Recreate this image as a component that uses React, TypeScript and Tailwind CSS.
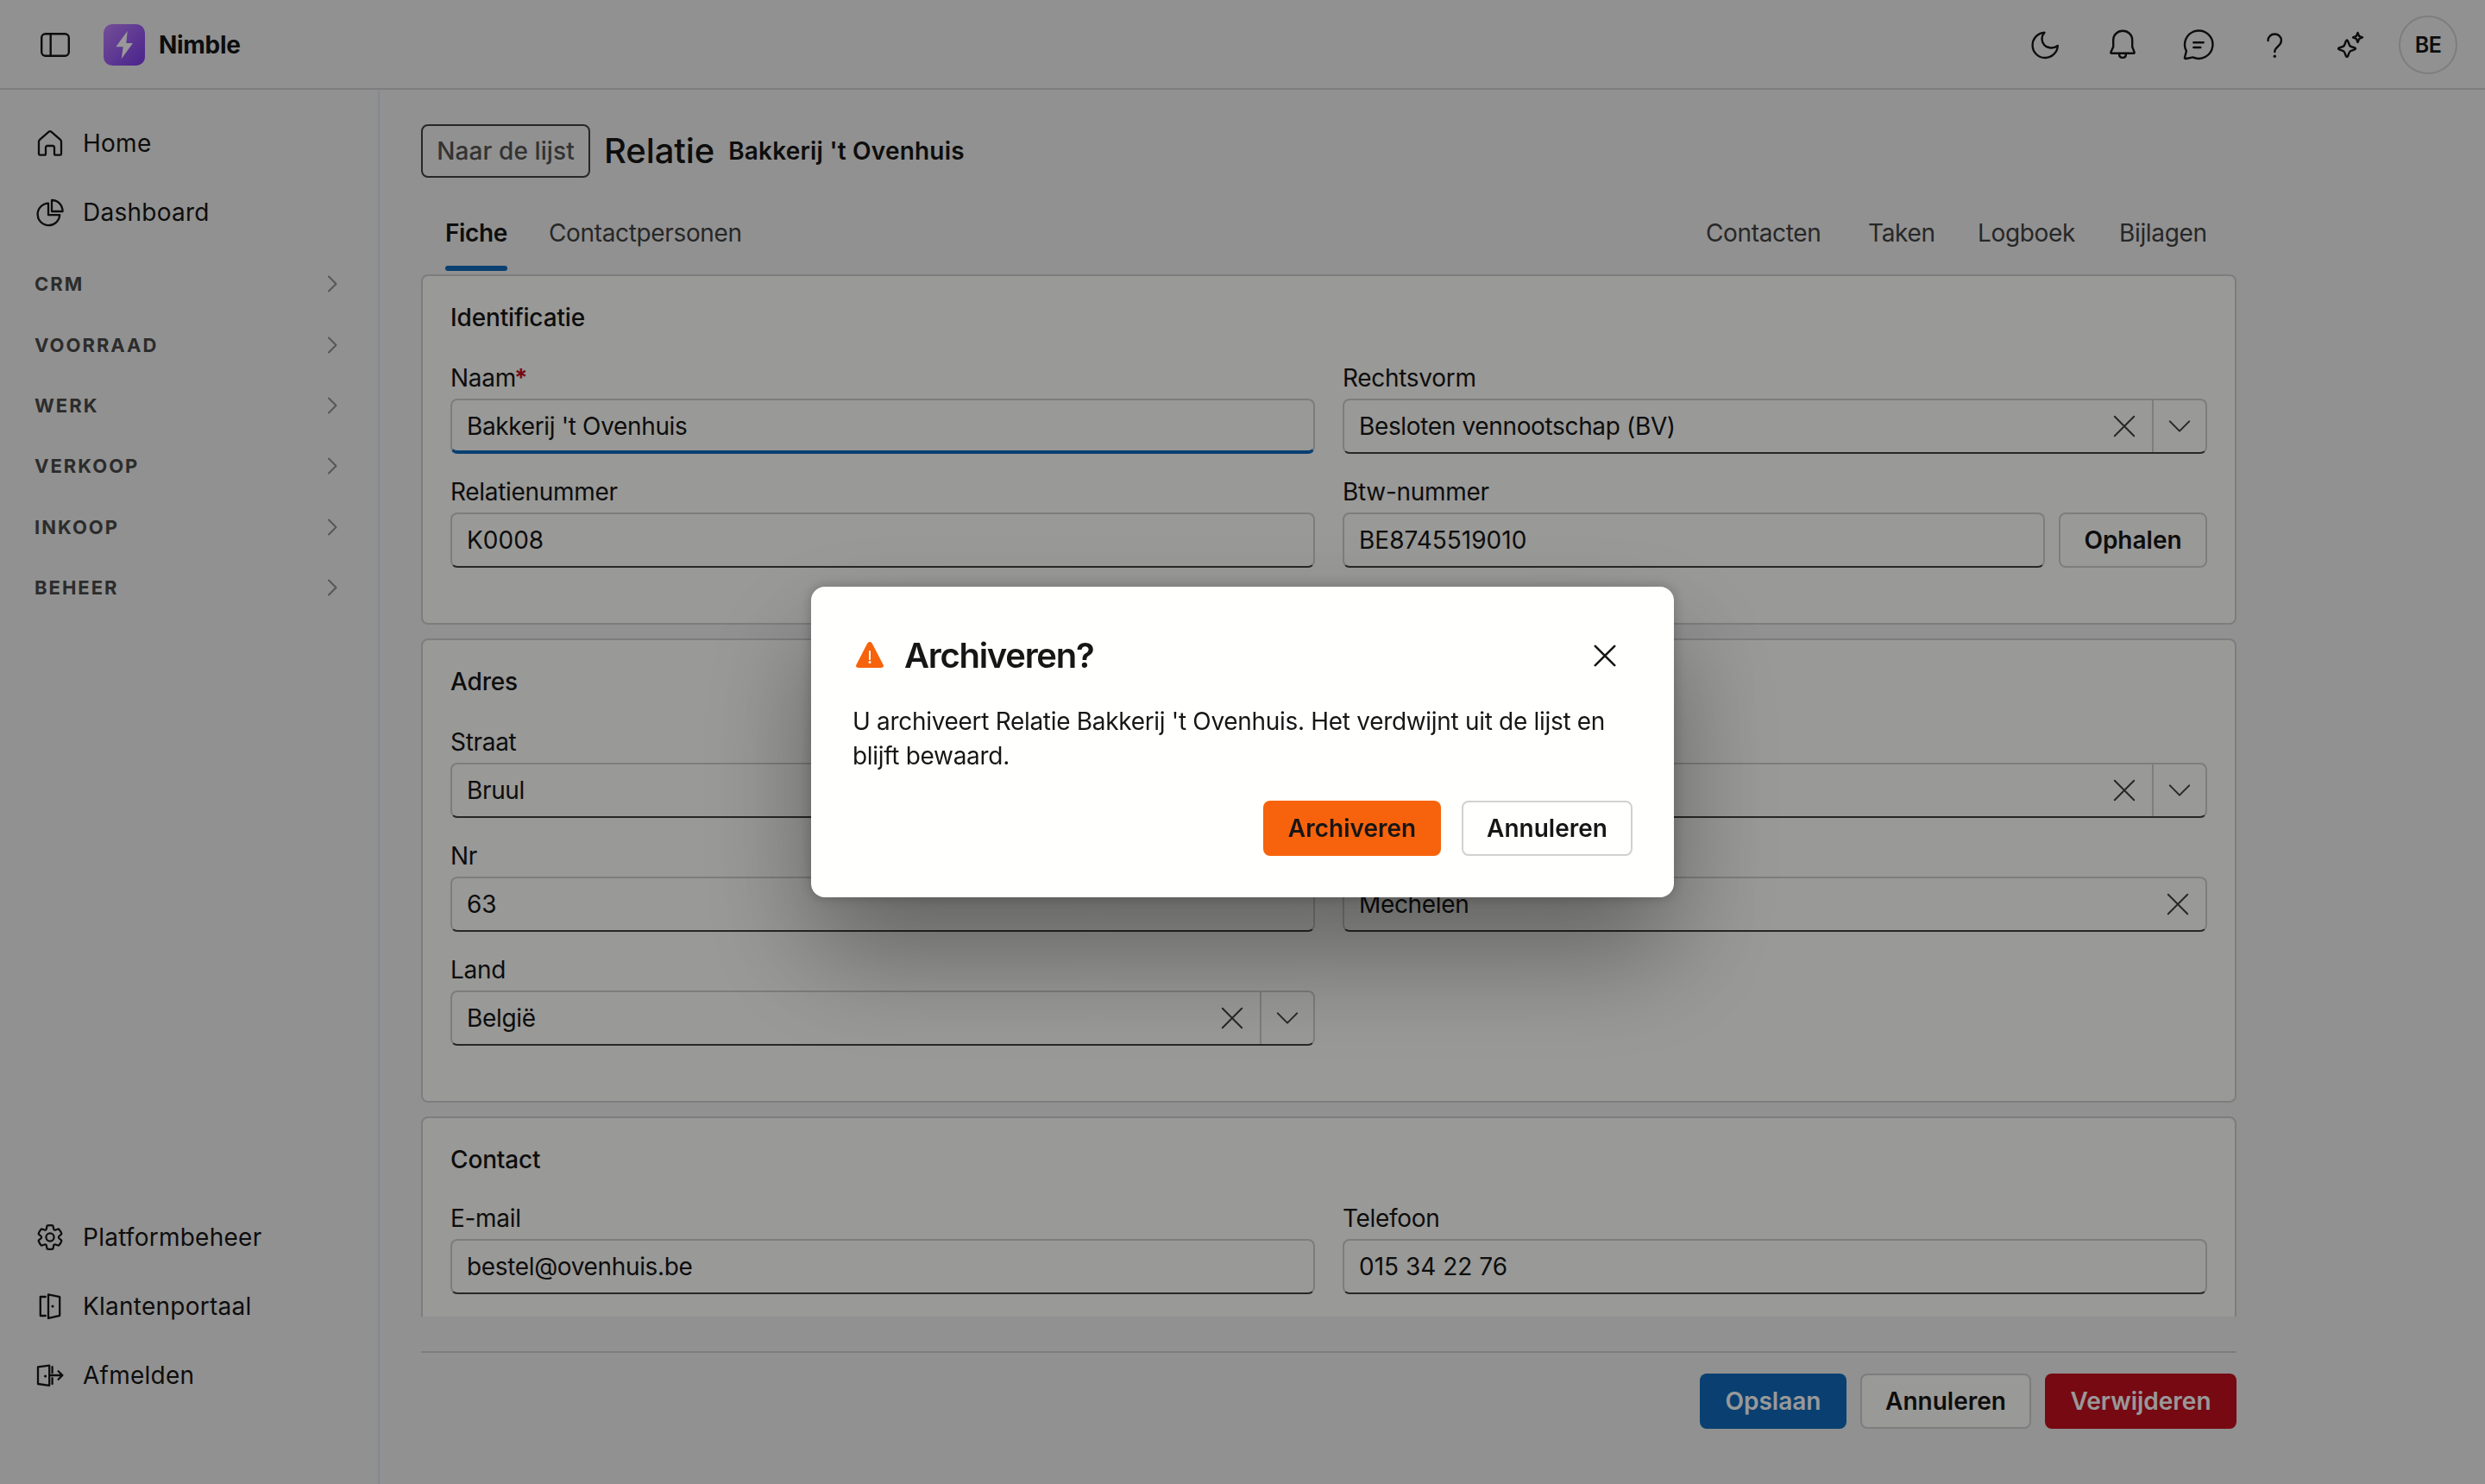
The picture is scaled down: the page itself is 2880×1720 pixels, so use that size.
import type { ReactNode } from "react";
import clsx from "clsx";

function Icon({ size = "size-10", box = 20, stroke = 1.15, children }: { size?: string; box?: number; stroke?: number; children: ReactNode }) {
  return (
    <svg
      className={clsx("shrink-0", size)}
      viewBox={`0 0 ${box} ${box}`}
      fill="none"
      stroke="currentColor"
      strokeWidth={stroke}
      strokeLinecap="round"
      strokeLinejoin="round"
    >
      {children}
    </svg>
  );
}

const HomeIcon = () => (
  <Icon>
    <path d="M9.2 3.4a1.2 1.2 0 0 1 1.6 0l5.3 4.7c.3.3.4.6.4 1v7c0 .4-.2.7-.6.7h-2.7a.7.7 0 0 1-.7-.7v-3.7a.9.9 0 0 0-.9-.9H8.4a.9.9 0 0 0-.9.9v3.7c0 .4-.3.7-.7.7H4.1a.7.7 0 0 1-.6-.7v-7c0-.4.1-.7.4-1z" />
  </Icon>
);

const PieIcon = () => (
  <Icon>
    <path d="M9 4.8a6.4 6.4 0 1 0 6.6 6.8H9z" />
    <path d="M11 3c3.5 0 6.2 2.7 6.3 6.5H11z" />
  </Icon>
);

const GearIcon = () => (
  <Icon stroke={1.35}>
    <g transform="translate(10 10) scale(.82) translate(-10 -10)">
      <path d="M1.91 7.38A8.5 8.5 0 0 1 3.69 4.3a.5.5 0 0 1 .54-.13l1.92.68a1 1 0 0 0 1.32-.76l.36-2a.5.5 0 0 1 .4-.4 8.53 8.53 0 0 1 3.55 0c.2.04.35.2.38.4l.37 2a1 1 0 0 0 1.32.76l1.92-.68a.5.5 0 0 1 .54.13 8.5 8.5 0 0 1 1.78 3.08c.06.2 0 .4-.15.54l-1.56 1.32a1 1 0 0 0 0 1.52l1.56 1.32a.5.5 0 0 1 .15.54 8.5 8.5 0 0 1-1.78 3.08.5.5 0 0 1-.54.13l-1.92-.68a1 1 0 0 0-1.32.76l-.37 2a.5.5 0 0 1-.38.4 8.53 8.53 0 0 1-3.56 0 .5.5 0 0 1-.39-.4l-.36-2a1 1 0 0 0-1.32-.76l-1.92.68a.5.5 0 0 1-.54-.13 8.5 8.5 0 0 1-1.78-3.08.5.5 0 0 1 .15-.54l1.56-1.32a1 1 0 0 0 0-1.52L2.06 7.92a.5.5 0 0 1-.15-.54Z" />
      <circle cx="10" cy="10" r="2.8" />
    </g>
  </Icon>
);

const DoorIcon = () => (
  <Icon>
    <path d="M9 3.2l6.6 1.4v10.8L9 16.9zM7.4 4.5h-3v11h3" />
    <circle cx="11.5" cy="10" r=".8" fill="currentColor" stroke="none" />
  </Icon>
);

const ExitIcon = () => (
  <Icon>
    <path d="M3 5.2l6.6-.9v11.6L3 15zM11.3 5.1v3.5M11.3 11.6v3.4M9.8 10h7.3M14.8 7.6l2.4 2.4-2.4 2.4" />
    <circle cx="7.3" cy="10.5" r=".8" fill="currentColor" stroke="none" />
  </Icon>
);

const CloseIcon = ({ stroke = 2 }: { stroke?: number }) => (
  <Icon size="size-8" box={32} stroke={stroke}>
    <path d="M4.8 4.8l22.4 22.4M27.2 4.8L4.8 27.2" />
  </Icon>
);

const ChevronDown = () => (
  <Icon size="size-8" box={32} stroke={2}>
    <path d="M4.8 10.4L16 21.6l11.2-11.2" />
  </Icon>
);

const topbarIcons = [
  <path d="M21.5 9.8A14.6 14.6 0 1 0 36.8 25c-2.6 2-5.3 2.7-8.3 2.5-6.5-.5-10-5.5-10-10.5 0-3 1-5 3-7.2z" />,
  <>
    <path d="M24.2 7.8c-6.2 0-11 4.6-11 10.6v7.8l-2.8 6.2c-.3.7 0 1.3.8 1.3h25.6c.8 0 1.1-.6.8-1.3l-2.4-6.2v-7.8c0-6-4.8-10.6-11-10.6z" />
    <path d="M20 33.9c0 3.3 1.5 5 4 5s4-1.7 4-5" />
  </>,
  <>
    <path d="M17.5 38.4A16.2 16.2 0 1 0 9.9 31.2L8 38.5c-.3 1.1.3 1.7 1.4 1.5z" />
    <path d="M18.3 21.3h11.4M18.3 27h8" />
  </>,
  <>
    <path d="M16.6 19c0-4.5 3.3-7.5 7.7-7.5s7.6 3.2 7.6 7.5c0 3.5-2 5-4.2 7.2-2.2 2-3.4 3.4-3.4 5.8" />
    <circle cx="24.3" cy="37.3" r="1.7" fill="currentColor" stroke="none" />
  </>,
  <>
    <path d="M18.9 19.5q1.1-2.3 2.2 0l1.7 4.5q.5 1.5 2 2l4.2 1.3q2 1 0 2l-4.2 1.5q-1.5.4-2 1.8l-1.7 4.4q-1.1 2.3-2.2 0l-1.7-4.4q-.5-1.4-2-1.8L11 29.3q-2-1 0-2l4.2-1.3q1.5-.5 2-2z" />
    <path d="M32.5 9.9l1.6 4 3.9 1.5-3.9 1.6-1.6 4-1.6-4-3.9-1.6 3.9-1.5z" />
  </>,
];

function Topbar() {
  return (
    <header className="flex h-[104px] shrink-0 items-center border-b-2 border-[#d1d1d1] pt-0.5 pr-8 pl-10">
      <Icon size="size-12" box={48} stroke={2.4}>
        <rect x="8.2" y="11.2" width="31.6" height="25.6" rx="4.5" />
        <path d="M18.7 11.2v25.6" />
      </Icon>
      <svg className="ml-8 size-12" viewBox="0 0 48 48">
        <defs>
          <linearGradient id="logo" x1="0" y1="0" x2="1" y2="1">
            <stop offset="0" stopColor="#c084fc" />
            <stop offset="1" stopColor="#7c3aed" />
          </linearGradient>
        </defs>
        <rect width="48" height="48" rx="10" fill="url(#logo)" />
        <path d="M27.7 8L14.3 26.3h8.4l-2 14L34 22h-7.7z" fill="#fff" />
      </svg>
      <span className="ml-4 font-bold tracking-[-0.3px]">Nimble</span>
      <div className="ml-auto flex">
        {topbarIcons.map((icon, i) => (
          <button key={i} className="flex w-[88px] justify-center">
            <Icon size="size-12" box={48} stroke={2.4}>{icon}</Icon>
          </button>
        ))}
      </div>
      <div className="ml-3 flex size-[68px] items-center justify-center rounded-full border-2 border-[#d1d1d1] text-[25px] font-semibold tracking-[-0.5px]">
        BE
      </div>
    </header>
  );
}

const groups = ["CRM", "Voorraad", "Werk", "Verkoop", "Inkoop", "Beheer"];

function NavItem({ icon, label }: { icon: ReactNode; label: string }) {
  return (
    <a className="flex h-20 items-center gap-[18px] tracking-[0.25px]">
      {icon}
      {label}
    </a>
  );
}

function Sidebar() {
  return (
    <aside className="flex w-[440px] shrink-0 flex-col border-r-2 border-[#dde5ed] pt-[22px] pr-[46px] pb-[86px] pl-[38px]">
      <NavItem icon={<HomeIcon />} label="Home" />
      <NavItem icon={<PieIcon />} label="Dashboard" />
      <div className="mt-2 flex flex-col">
        {groups.map((group) => (
          <div key={group} className="flex h-[70.4px] items-center justify-between pl-0.5">
            <span className="text-[22px] font-bold tracking-[2px] text-[#4a4a4a] uppercase">{group}</span>
            <svg className="mr-px h-5 w-3 text-[#8f8f8f]" viewBox="0 0 12 20" fill="none" stroke="currentColor" strokeWidth="2" strokeLinecap="round" strokeLinejoin="round">
              <path d="M2 1.5l8.5 8.5L2 18.5" />
            </svg>
          </div>
        ))}
      </div>
      <div className="mt-auto flex flex-col">
        <NavItem icon={<GearIcon />} label="Platformbeheer" />
        <NavItem icon={<DoorIcon />} label="Klantenportaal" />
        <NavItem icon={<ExitIcon />} label="Afmelden" />
      </div>
    </aside>
  );
}

interface FieldProps {
  label: string;
  value: string;
  required?: boolean;
  focused?: boolean;
  clearable?: boolean;
  select?: boolean;
  action?: string;
}

function Field({ label, value, required, focused, clearable, select, action }: FieldProps) {
  return (
    <div className="flex flex-col gap-1">
      <label className="h-10 tracking-[-0.3px]">
        {label}
        {required && <span className="-ml-0.5 font-bold text-[#c50f1f]">*</span>}
      </label>
      <div className="flex gap-4">
        <div
          className={clsx(
            "flex h-16 flex-1 items-center rounded-lg border-2 border-[#d1d1d1] pl-[17px]",
            focused ? "border-b-4 border-b-[#0f6cbd] pt-0.5" : "border-b-[#424242]",
          )}
        >
          <span className={clsx("flex-1", /[a-z]/.test(value) && "tracking-[-0.35px]")}>{value}</span>
          {(clearable || select) && (
            <span className="flex w-16 justify-center text-[#424242]">
              <CloseIcon />
            </span>
          )}
          {select && (
            <span className="flex h-full w-[62px] items-center justify-center border-l-2 border-[#d1d1d1] text-[#424242]">
              <ChevronDown />
            </span>
          )}
        </div>
        {action && (
          <button className="h-16 w-[172px] rounded-lg border-2 border-[#d1d1d1] font-semibold">{action}</button>
        )}
      </div>
    </div>
  );
}

function Card({ title, className, children }: { title: string; className?: string; children: ReactNode }) {
  return (
    <section className={clsx("shrink-0 rounded-lg border-2 border-[#d1d1d1] bg-[#fffffc] px-8 pt-7", className)}>
      <h2 className="h-10 font-medium tracking-[-0.15px]">{title}</h2>
      {children}
    </section>
  );
}

function Tabs() {
  return (
    <nav className="mt-8 flex h-20 items-start pt-3 pr-[34px] pl-7 tracking-[-0.35px] text-[#424242]">
      <span className="flex h-16 w-[72px] flex-col justify-between font-semibold text-[#161616]">
        Fiche
        <span className="h-1.5 rounded-full bg-[#0f6cbd]" />
      </span>
      <span className="ml-12">Contactpersonen</span>
      <div className="ml-auto flex">
        <span className="w-[188px]">Contacten</span>
        <span className="w-[127px]">Taken</span>
        <span className="w-[164px]">Logboek</span>
        <span className="w-[102px]">Bijlagen</span>
      </div>
    </nav>
  );
}

function RelationPage() {
  return (
    <main className="flex w-[2152px] flex-col pl-12 pt-10">
      <div className="flex h-[62px] items-center gap-4">
        <button className="h-[62px] w-[196px] rounded-lg border-2 border-[#424242] font-medium tracking-[0.1px] text-[#555]">Naar de lijst</button>
        <h1 className="text-[40px] font-medium tracking-[-0.1px]">Relatie</h1>
        <span className="font-semibold tracking-[0.2px]">Bakkerij 't Ovenhuis</span>
      </div>
      <Tabs />
      <div className="flex h-[1208px] shrink-0 flex-col gap-4 overflow-hidden">
        <Card title="Identificatie" className="h-[406px]">
          <div className="mt-[30px] grid grid-cols-2 gap-x-8 gap-y-6">
            <Field label="Naam" value="Bakkerij 't Ovenhuis" required focused />
            <Field label="Rechtsvorm" value="Besloten vennootschap (BV)" select />
            <Field label="Relatienummer" value="K0008" />
            <Field label="Btw-nummer" value="BE8745519010" action="Ophalen" />
          </div>
        </Card>
        <Card title="Adres" className="h-[538px]">
          <div className="mt-[30px] grid grid-cols-2 gap-x-8 gap-y-6">
            <Field label="Straat" value="Bruul" />
            <Field label="" value="" select />
            <Field label="Nr" value="63" />
            <Field label="" value="Mechelen" clearable />
            <Field label="Land" value="België" select />
          </div>
        </Card>
        <Card title="Contact" className="h-[406px]">
          <div className="mt-7 grid grid-cols-2 gap-x-8 gap-y-6">
            <Field label="E-mail" value="bestel@ovenhuis.be" />
            <Field label="Telefoon" value="015 34 22 76" />
          </div>
        </Card>
      </div>
      <footer className="mt-10 flex justify-end gap-4 border-t-2 border-[#d1d1d1] pt-6 font-semibold">
        <button className="h-16 w-[170px] rounded-lg bg-[#0f6cbd] text-white">Opslaan</button>
        <button className="h-16 w-[198px] rounded-lg border-2 border-[#d1d1d1] bg-[#fffffc]">Annuleren</button>
        <button className="h-16 w-[222px] rounded-lg bg-[#c50f1f] text-white">Verwijderen</button>
      </footer>
    </main>
  );
}

function ArchiveDialog() {
  return (
    <div className="fixed inset-0 z-50 flex items-center justify-center bg-black/40">
      <div className="w-[1000px] rounded-2xl bg-[#fffffd] p-12 shadow-[0_0_16px_rgba(0,0,0,0.24),0_64px_128px_rgba(0,0,0,0.36)]">
        <div className="flex h-16 items-center">
          <svg className="size-10" viewBox="0 0 40 40">
            <path d="M17.3 5.6c1.2-2.1 4.200-2.100 5.400 0L35.600 30.500c1.100 2-.3 3.500-2.700 3.500H7.100c-2.400 0-3.800-1.500-2.700-3.500z" fill="#f7630c" />
            <path d="M20 15v9" stroke="#fff" strokeWidth="2" strokeLinecap="round" />
            <circle cx="20" cy="27.5" r="1.5" fill="#fff" />
          </svg>
          <h2 className="ml-5 text-[40px] font-semibold tracking-[-1.3px]">Archiveren?</h2>
          <button className="mr-4 ml-auto">
            <CloseIcon stroke={2.6} />
          </button>
        </div>
        <p className="mt-6 tracking-[-0.31px]">
          U archiveert Relatie Bakkerij 't Ovenhuis. Het verdwijnt uit de lijst en blijft bewaard.
        </p>
        <div className="mt-8 flex justify-end gap-6 font-semibold">
          <button className="h-16 w-[206px] rounded-lg bg-[#f7630c]">Archiveren</button>
          <button className="h-16 w-[198px] rounded-lg border-2 border-[#d1d1d1]">Annuleren</button>
        </div>
      </div>
    </div>
  );
}

export default function App() {
  return (
    <div className="flex h-screen flex-col overflow-hidden bg-[#f2f2f2] font-[Inter,sans-serif] text-[28px] leading-10 text-[#161616]">
      <Topbar />
      <div className="flex min-h-0 flex-1">
        <Sidebar />
        <RelationPage />
      </div>
      <ArchiveDialog />
    </div>
  );
}
